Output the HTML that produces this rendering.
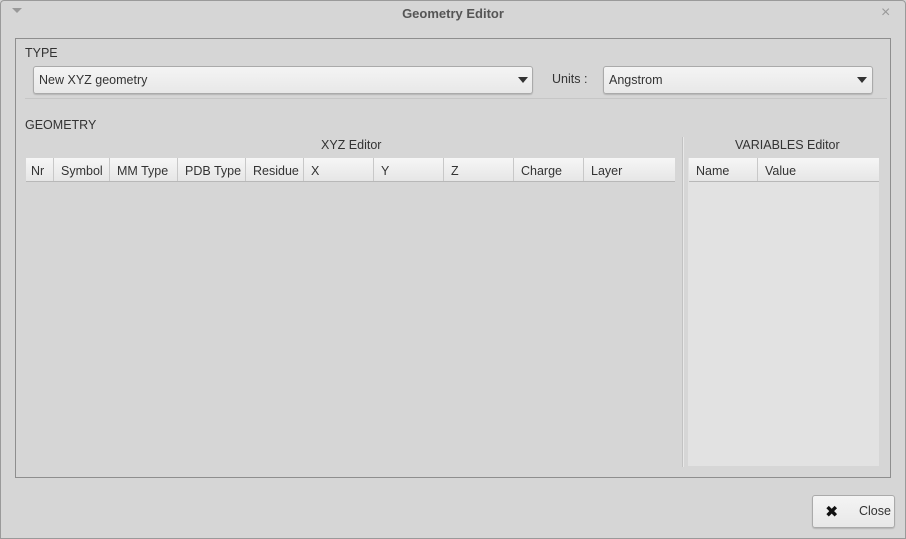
<!DOCTYPE html>
<html><head><style>
body{margin:0;width:906px;height:539px;background:#d6d6d6;font-family:"Liberation Sans","DejaVu Sans",sans-serif;font-size:12.5px;color:#333;position:relative;overflow:hidden}
.a{position:absolute}
.win{left:0;top:0;width:904px;height:537px;border:1px solid #9a9a9a;border-radius:4px 4px 0 0}
.title{left:0;top:6px;width:906px;text-align:center;font-weight:bold;color:#555;font-size:13px}
.combo{background:linear-gradient(#f4f4f4,#e8e8e8);border:1px solid #aaa;border-radius:3px;box-shadow:0 1px 1px rgba(0,0,0,.15)}
.arrow{width:0;height:0;border-left:5px solid transparent;border-right:5px solid transparent;border-top:6px solid #333}
.hdr{background:linear-gradient(#f6f6f6,#e6e6e6);border-bottom:1px solid #b8b8b8;height:23px}
.hdr span{position:absolute;top:0;height:23px;line-height:26px;padding-left:7px;border-right:1px solid #c8c8c8;box-sizing:border-box}
</style></head><body>
<div class="a win"></div>
<div class="a" style="left:12px;top:8px;width:0;height:0;border-left:5px solid transparent;border-right:5px solid transparent;border-top:5px solid #999"></div>
<div class="a title">Geometry Editor</div>
<div class="a" style="left:881px;top:4px;color:#999;font-size:16px">×</div>
<div class="a" style="left:15px;top:38px;width:874px;height:438px;border:1px solid #8e8e8e"></div>
<div class="a" style="left:25px;top:46px">TYPE</div>
<div class="a combo" style="left:33px;top:66px;width:498px;height:26px"><span class="a" style="left:5px;top:6px">New XYZ geometry</span><div class="a arrow" style="left:484px;top:10px"></div></div>
<div class="a" style="left:552px;top:72px">Units :</div>
<div class="a combo" style="left:603px;top:66px;width:268px;height:26px"><span class="a" style="left:5px;top:6px">Angstrom</span><div class="a arrow" style="left:253px;top:10px"></div></div>
<div class="a" style="left:25px;top:98px;width:862px;height:1px;background:#c6c6c6"></div>
<div class="a" style="left:25px;top:118px">GEOMETRY</div>
<div class="a" style="left:321px;top:138px">XYZ Editor</div>
<div class="a hdr" style="left:26px;top:158px;width:649px">
<span style="left:0;width:28px;padding-left:5px">Nr</span><span style="left:28px;width:56px">Symbol</span><span style="left:84px;width:68px">MM Type</span><span style="left:152px;width:68px">PDB Type</span><span style="left:220px;width:58px">Residue</span><span style="left:278px;width:70px">X</span><span style="left:348px;width:70px">Y</span><span style="left:418px;width:70px">Z</span><span style="left:488px;width:70px">Charge</span><span style="left:558px;width:91px;border-right:none">Layer</span></div>
<div class="a" style="left:682px;top:137px;width:1px;height:330px;background:#c2c2c2"></div>
<div class="a" style="left:683px;top:137px;width:1px;height:330px;background:#e8e8e8"></div>
<div class="a" style="left:735px;top:138px">VARIABLES Editor</div>
<div class="a" style="left:688px;top:158px;width:191px;height:308px;background:#e2e2e2"></div>
<div class="a hdr" style="left:689px;top:158px;width:190px">
<span style="left:0;width:69px">Name</span><span style="left:69px;width:121px;border-right:none">Value</span></div>
<div class="a combo" style="left:812px;top:495px;width:81px;height:31px"><span class="a" style="left:12px;top:6px;font-weight:bold;font-size:16px;color:#111">✖</span><span class="a" style="left:46px;top:8px">Close</span></div>
</body></html>
